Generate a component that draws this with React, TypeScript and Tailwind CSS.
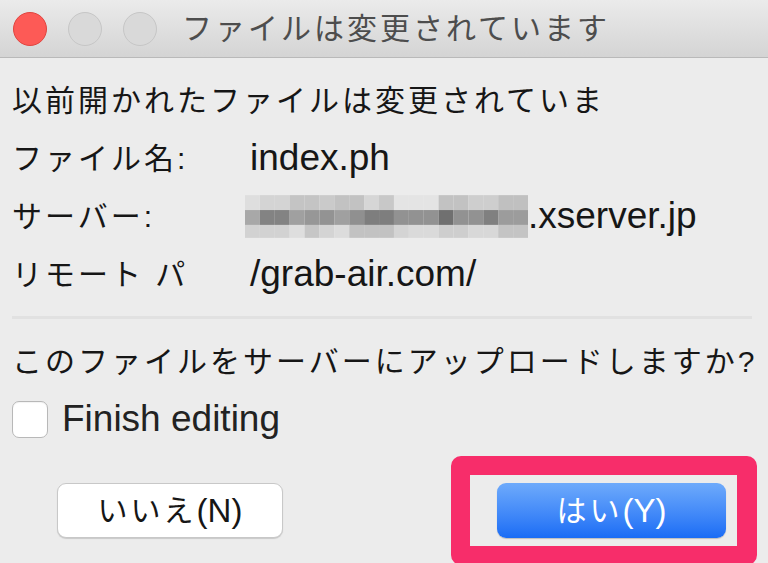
const jp = "font-['Liberation_Sans','Noto_Sans_CJK_JP',sans-serif]";

// mosaic over the host name: [top, middle, bottom] grey per column
const mosaic: [string, string, string][] = [
  ["#dedede", "#a8a8a8", "#d2d2d2"],
  ["#d4d4d4", "#838383", "#d2d2d2"],
  ["#d4d4d4", "#838383", "#d2d2d2"],
  ["#c4c4c4", "#a0a0a0", "#dedede"],
  ["#c4c4c4", "#979797", "#c6c6c6"],
  ["#cacaca", "#939393", "#d4d4d4"],
  ["#c2c2c2", "#a0a0a0", "#dcdcdc"],
  ["#c2c2c2", "#909090", "#c2c2c2"],
  ["#d6d6d6", "#7e7e7e", "#c2c2c2"],
  ["#c8c8c8", "#7e7e7e", "#c2c2c2"],
  ["#e4e4e4", "#929292", "#d4d4d4"],
  ["#e4e4e4", "#929292", "#dadada"],
  ["#e4e4e4", "#929292", "#dadada"],
  ["#c2c2c2", "#707070", "#cecece"],
  ["#c2c2c2", "#929292", "#cecece"],
  ["#cecece", "#929292", "#d8d8d8"],
  ["#cecece", "#808080", "#d8d8d8"],
  ["#c0c0c0", "#9c9c9c", "#c4c4c4"],
  ["#c0c0c0", "#9c9c9c", "#c4c4c4"],
];

function Mosaic() {
  return (
    <svg width={283} height={43} viewBox="0 0 285 43" className="-ml-[5px] shrink-0 blur-[0.6px]">
      {mosaic.map((col, i) =>
        col.map((c, j) => (
          <rect key={`${i}-${j}`} x={i * 15} y={j === 0 ? 0 : j === 1 ? 15 : 30} width={15} height={j === 2 ? 13 : 15} fill={c} />
        ))
      )}
    </svg>
  );
}

function Row({ label, children }: { label: string; children: React.ReactNode }) {
  return (
    <div className="flex h-[58px] items-center">
      <div className="w-[238px] shrink-0 text-[30px] tracking-[3px]">{label}</div>
      <div className="flex items-center text-[37px]">{children}</div>
    </div>
  );
}

export default function App() {
  return (
    <div className={`h-[563px] w-[768px] overflow-hidden bg-[#ececec] text-[#161616] ${jp}`}>
      {/* Title bar */}
      <div className="relative flex h-[58px] items-center border-b border-[#b9b9b9] bg-gradient-to-b from-[#ebebeb] to-[#d4d4d4] pl-[13px]">
        <div className="flex items-center gap-[21px]">
          <span className="h-[34px] w-[34px] rounded-full border border-[#e0443e] bg-[#fd5a56]" />
          <span className="h-[34px] w-[34px] rounded-full border border-[#c6c6c6] bg-[#d9d9d9]" />
          <span className="h-[34px] w-[34px] rounded-full border border-[#c6c6c6] bg-[#d9d9d9]" />
        </div>
        <div className="ml-[25px] text-[30px] tracking-[3px] text-[#4d4d4d]">ファイルは変更されています</div>
      </div>

      {/* Body */}
      <div className="pl-[12px] pr-[16px] pt-[13px]">
        <div className="flex h-[58px] items-center text-[30px] tracking-[3px]">以前開かれたファイルは変更されていま</div>
        <Row label="ファイル名:">index.ph</Row>
        <Row label="サーバー:">
          <Mosaic />
          <span>.xserver.jp</span>
        </Row>
        <Row label="リモート パ">/grab-air.com/</Row>

        <div className="mt-[13px] h-[3px] bg-[#e1e1e1]" />

        <div className="mt-[13px] flex h-[58px] items-center whitespace-nowrap text-[30px] tracking-[3px]">
          このファイルをサーバーにアップロードしますか<span className="tracking-normal">?</span>
        </div>

        <div className="flex h-[58px] items-center">
          <span className="h-[37px] w-[36px] rounded-[7px] border border-[#b8b8b8] bg-white shadow-[inset_0_1px_1px_rgba(0,0,0,0.05)]" />
          <span className="ml-[14px] text-[37px] text-[#222]">Finish editing</span>
        </div>

        <div className="mt-[8px] flex items-center">
          <button className="ml-[45px] flex h-[55px] w-[226px] shrink-0 items-center justify-center rounded-[9px] border border-[#c8c8c8] bg-white text-[30px] tracking-[3px] shadow-[0_1px_1px_rgba(0,0,0,0.15)]">
            いいえ<span className="text-[33px] tracking-normal">(N)</span>
          </button>
          <div className="ml-[168px] shrink-0 rounded-[10px] border-[19px] border-r-[20px] border-[#f72d6a] py-[8px] pl-[27px] pr-[11px]">
            <button className="flex h-[55px] w-[229px] items-center justify-center rounded-[9px] bg-gradient-to-b from-[#6eaafb] to-[#196cf5] text-[30px] tracking-[3px] text-white shadow-[0_1px_1px_rgba(0,0,0,0.2)]">
              はい<span className="text-[33px] tracking-normal">(Y)</span>
            </button>
          </div>
        </div>
      </div>
    </div>
  );
}
